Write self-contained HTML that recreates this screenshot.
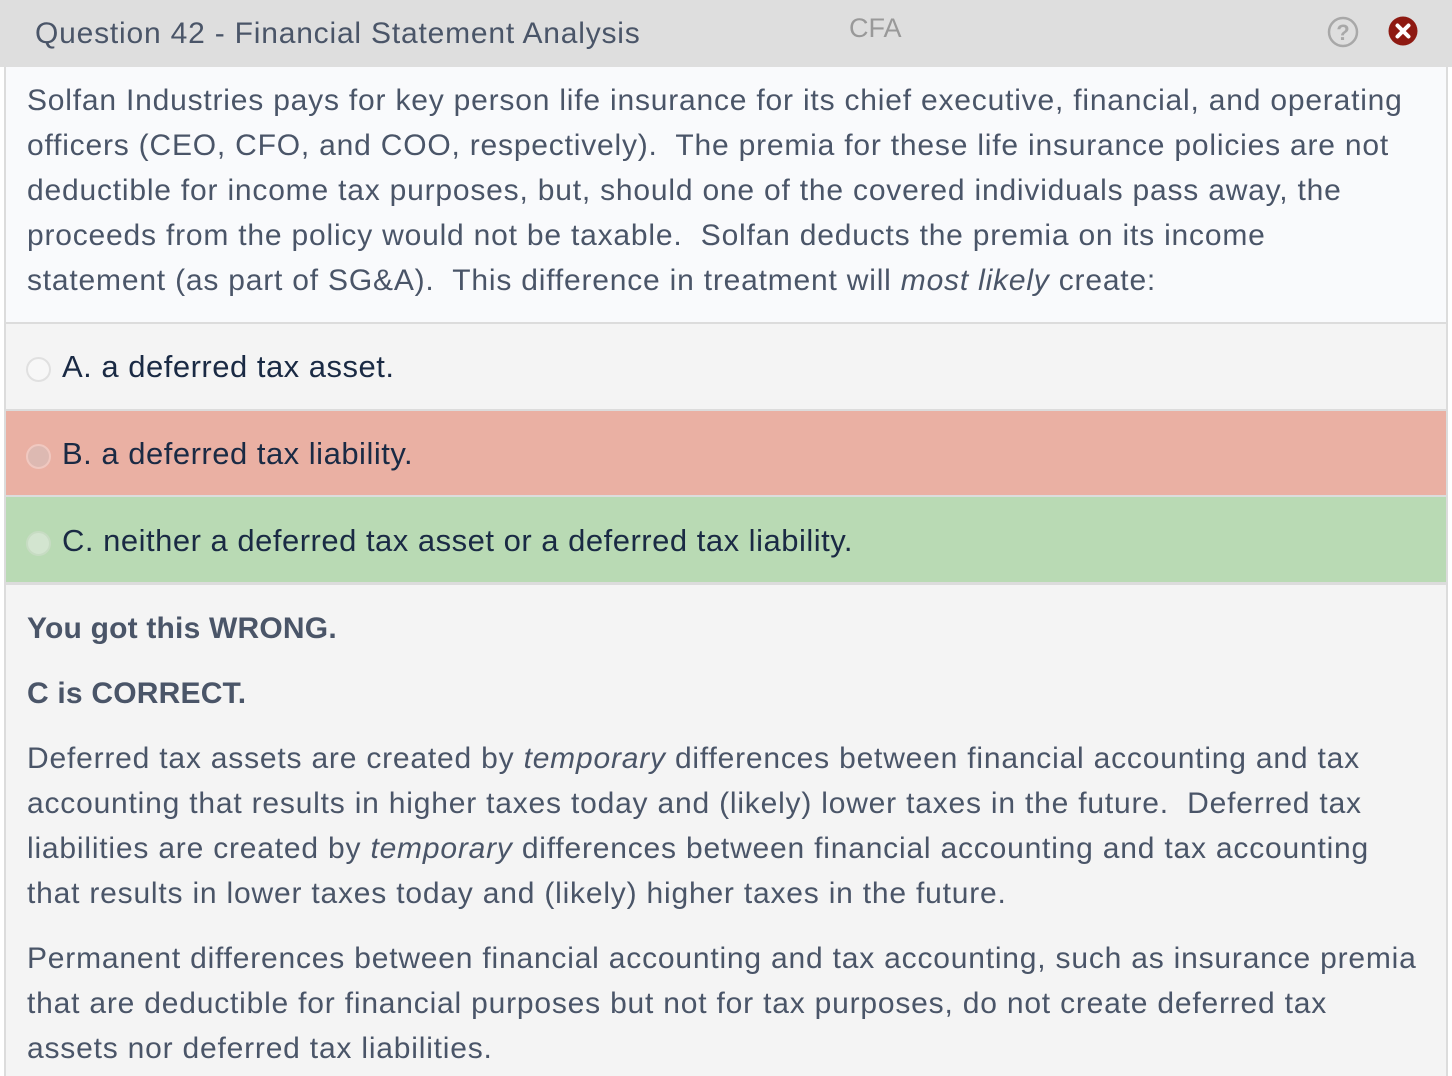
<!DOCTYPE html>
<html><head><meta charset="utf-8"><style>
*{margin:0;padding:0;box-sizing:border-box}
body{width:1452px;height:1076px;background:#fff;position:relative;overflow:hidden;font-family:"Liberation Sans",sans-serif;}
.abs{position:absolute}
.l{position:absolute;left:27px;white-space:nowrap;height:45px;line-height:45px;font-size:30px;letter-spacing:0.8px;color:#4a5568;margin-top:1px}
.o{position:absolute;left:62px;white-space:nowrap;line-height:45px;font-size:31px;letter-spacing:0.5px;color:#1a2a44;}
.r{position:absolute;left:26px;width:25px;height:25px;border-radius:50%;border:2px solid #e0e0e0;}
</style></head><body>
<div class="abs" style="left:4px;top:0;width:1444px;height:1076px;background:#dcdcdc"></div>
<div class="abs" style="left:0;top:0;width:1452px;height:67px;background:#dedede"></div>
<div class="abs" style="left:35px;top:11px;font-size:30px;letter-spacing:0.8px;line-height:45px;color:#4a5568;white-space:nowrap">Question 42 - Financial Statement Analysis</div>
<div class="abs" style="left:849px;top:9px;font-size:27px;line-height:38px;color:#999">CFA</div>
<svg class="abs" style="left:1326px;top:15px" width="34" height="34" viewBox="0 0 34 34"><circle cx="17" cy="17" r="14" fill="none" stroke="#a8a8a8" stroke-width="2.5"/><text x="17" y="25" text-anchor="middle" font-family="Liberation Sans" font-weight="bold" font-size="22" fill="#a8a8a8">?</text></svg>
<svg class="abs" style="left:1388px;top:16px" width="30" height="30" viewBox="0 0 30 30"><circle cx="15" cy="15" r="14.5" fill="#8e1a12"/><path d="M9.5 9.5L20.5 20.5M20.5 9.5L9.5 20.5" stroke="#fff" stroke-width="4" stroke-linecap="round"/></svg>
<div class="abs" style="left:6px;top:67px;width:1440px;height:255px;background:#f9fafc"></div>
<div class="abs" style="left:6px;top:324px;width:1440px;height:85px;background:#f4f4f4"></div>
<div class="abs" style="left:6px;top:411px;width:1440px;height:84px;background:#eab0a3"></div>
<div class="abs" style="left:6px;top:497px;width:1440px;height:85px;background:#b9dab4"></div>
<div class="abs" style="left:6px;top:585px;width:1440px;height:491px;background:#f4f4f4"></div>
<div class="l" style="top:77px">Solfan Industries pays for key person life insurance for its chief executive, financial, and operating</div>
<div class="l" style="top:122px">officers (CEO, CFO, and COO, respectively).&nbsp; The premia for these life insurance policies are not</div>
<div class="l" style="top:167px">deductible for income tax purposes, but, should one of the covered individuals pass away, the</div>
<div class="l" style="top:212px">proceeds from the policy would not be taxable.&nbsp; Solfan deducts the premia on its income</div>
<div class="l" style="top:257px">statement (as part of SG&amp;A).&nbsp; This difference in treatment will <i>most likely</i> create:</div>
<div class="r" style="top:357px;background:#f7f7f7"></div>
<div class="o" style="top:344px">A. a deferred tax asset.</div>
<div class="r" style="top:444px;background:#ddb9b2;border-color:#f0c8c0"></div>
<div class="o" style="top:431px">B. a deferred tax liability.</div>
<div class="r" style="top:531px;background:#d3e5d0;border-color:#c7dcc3"></div>
<div class="o" style="top:518px">C. neither a deferred tax asset or a deferred tax liability.</div>
<div class="l" style="top:605px;font-weight:bold;letter-spacing:0.2px">You got this WRONG.</div>
<div class="l" style="top:670px;font-weight:bold;letter-spacing:0.2px">C is CORRECT.</div>
<div class="l" style="top:735px">Deferred tax assets are created by <i>temporary</i> differences between financial accounting and tax</div>
<div class="l" style="top:780px">accounting that results in higher taxes today and (likely) lower taxes in the future.&nbsp; Deferred tax</div>
<div class="l" style="top:825px">liabilities are created by <i>temporary</i> differences between financial accounting and tax accounting</div>
<div class="l" style="top:870px">that results in lower taxes today and (likely) higher taxes in the future.</div>
<div class="l" style="top:935px">Permanent differences between financial accounting and tax accounting, such as insurance premia</div>
<div class="l" style="top:980px">that are deductible for financial purposes but not for tax purposes, do not create deferred tax</div>
<div class="l" style="top:1025px">assets nor deferred tax liabilities.</div>
</body></html>
